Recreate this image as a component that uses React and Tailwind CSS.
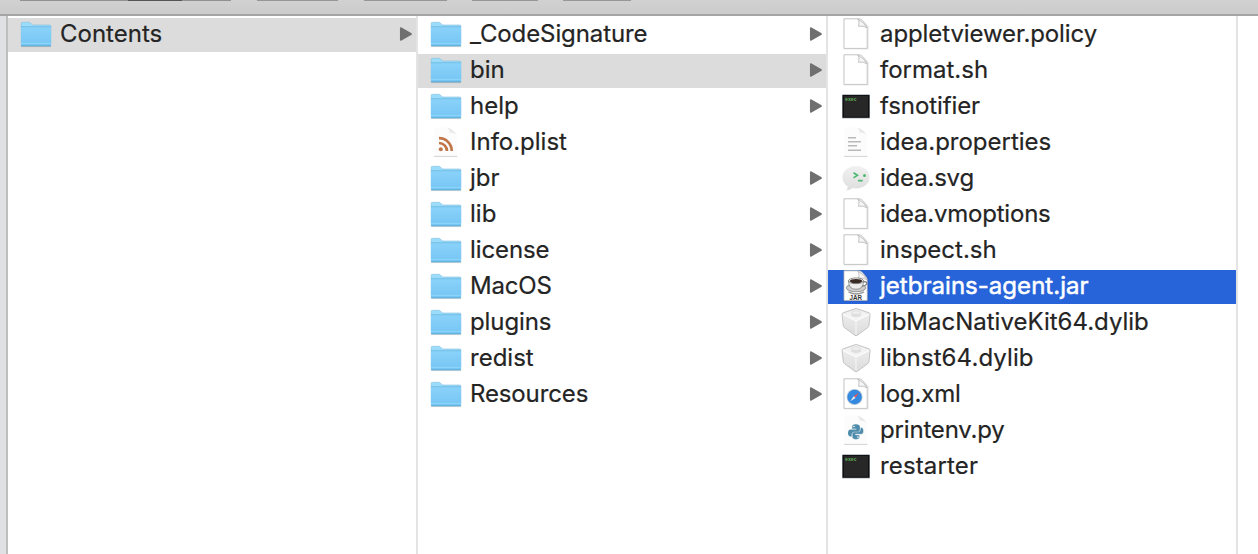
import React from "react";

const Folder = () => (
  <svg width="34" height="34" viewBox="0 0 34 34">
    <defs>
      <linearGradient id="folder" x1="0" y1="0" x2="0" y2="1">
        <stop offset="0" stopColor="#8ad2fa" />
        <stop offset="1" stopColor="#74c5f3" />
      </linearGradient>
    </defs>
    <path d="M2 28.6h30" stroke="#000" strokeOpacity=".16" strokeWidth="1" />
    <path d="M2.2 5.4q0-1.1 1.1-1.1h6.5q1 0 1.7.8l1.1 1.2q.6.7 1.6.7h16.6q1.1 0 1.1 1.1V26H2.200z" fill="#9bdcfb" stroke="#7fbfe0" strokeWidth=".6" />
    <path d="M2 9h30v18q0 1-1 1H3q-1 0-1-1z" fill="url(#folder)" />
    <path d="M2 8.700h30" stroke="#65b1dc" strokeWidth=".7" />
    <path d="M2 25.400h30" stroke="#8ed6fc" strokeWidth="1" />
    <path d="M2 27.300q0 .6 1 .6h28q1 0 1-.6" fill="none" stroke="#5ba6cf" strokeWidth=".9" />
  </svg>
);

const Page = ({ children }) => (
  <svg width="34" height="34" viewBox="-1 0 34 34">
    <path d="M4.500 1.200h16.200L28 8.600V30.800H4.500z" fill="none" stroke="#000" strokeOpacity=".06" strokeWidth="2" />
    <path d="M4 .8h14.600q2.200 0 3.700 1.600l3.700 4.400q1.200 1.400 1.200 3.400V30.400H4z" fill="#fff" stroke="#b9b9b9" strokeWidth=".8" />
    <path d="M17.600 1q2 1.200 1 7.300 4.800-1 8.400 1.500Q24.300 4.200 17.600 1z" fill="#f6f6f6" stroke="#b5b5b5" strokeWidth=".8" />
    {children}
  </svg>
);

const SoftPage = ({ children }) => (
  <svg width="34" height="34" viewBox="-1 0 34 34">
    <defs>
      <linearGradient id="curl" x1="0" y1="1" x2="1" y2="0">
        <stop offset="0" stopColor="#fff" />
        <stop offset="1" stopColor="#d5d5d5" />
      </linearGradient>
    </defs>
    <path d="M4.500 1.500h14q4 1 8.500 8V30H4.500z" fill="#fcfcfc" />
    <path d="M15.500 1.200q4 .4 4 5.800 5.400-.7 7.600 2.400Q23.100 2.600 15.500 1.200z" fill="url(#curl)" />
    <path d="M4 30.400h23.400" stroke="#c8c8c8" strokeWidth=".8" />
    {children}
  </svg>
);

const Feed = () => (
  <SoftPage>
    <g fill="none" stroke="#c07648" strokeWidth="2.700">
      <path d="M9 12.200a12.700 12.700 0 0 1 12.700 12.700" />
      <path d="M9 17a8 8 0 0 1 8 8" />
    </g>
    <circle cx="10.800" cy="23.200" r="2" fill="#c07648" />
  </SoftPage>
);

const Lines = () => (
  <SoftPage>
    <path d="M8 11.800h8M8 15.800h13M8 19.800h9M8 24.300h13" stroke="#b9b9b9" strokeWidth="1.500" />
  </SoftPage>
);

const Python = () => (
  <SoftPage>
    <g fill="#4d8baa">
      <path d="M15.8 10.2c-3 0-3.600 1.100-3.600 2.500v2h4.100v.7h-5.800c-1.600 0-2.500 1.500-2.500 3.700s1 3.500 2.400 3.500h1.300v-2.100c0-1.500 1.200-2.500 2.600-2.500h3.500c1.200 0 2.100-.9 2.100-2.100v-3.200c0-1.600-1.500-2.500-4.100-2.500z" />
      <path d="M15.800 25.400c3 0 3.800-1.100 3.800-2.500v-2h-4.100v-.7h5.800c1.600 0 2.200-1.500 2.200-3.500s-.9-3.300-2.100-3.300h-1v1.900c0 1.500-1.200 2.700-2.600 2.700h-3.500c-1.200 0-2.100.9-2.100 2.100v2.800c0 1.600 1.400 2.500 3.600 2.500z" stroke="#fcfcfc" strokeWidth=".4" />
    </g>
    <circle cx="14" cy="12.500" r=".8" fill="#fff" />
    <circle cx="17.900" cy="23.100" r=".8" fill="#fff" />
  </SoftPage>
);

const Exec = () => (
  <svg width="34" height="34" viewBox="-1 0 34 34">
    <rect x="2" y="4.400" width="28" height="24.200" rx="1" fill="#aab8c2" />
    <rect x="2.500" y="4.900" width="27" height="22.900" fill="#101010" />
    <rect x="4" y="6" width="24" height="20.700" fill="#272727" />
    <text x="5" y="11.200" fontFamily="Liberation Mono, monospace" fontSize="4.800" fontWeight="700" fill="#62b15d">exec</text>
  </svg>
);

const Bubble = () => (
  <svg width="34" height="34" viewBox="-1 0 34 34">
    <defs>
      <linearGradient id="bubble" x1="0" y1="0" x2="0" y2="1">
        <stop offset="0" stopColor="#f1f1f1" />
        <stop offset="1" stopColor="#dedede" />
      </linearGradient>
    </defs>
    <path d="M16 4C8.200 4 2.400 9 2.400 15.200c0 4 2 7.200 5.200 9.200.2 1.700-.5 3-1.600 4.100 2.700-.2 4.800-1 6.500-2.500 1.100.3 2.300.4 3.500.4 7.800 0 13.600-4.900 13.600-11.200S23.800 4 16 4z" fill="url(#bubble)" />
    <path d="M13.500 10.700l4 2.500-4 2.700M18 18.600h4.700" fill="none" stroke="#4cb972" strokeWidth="1.600" />
    <circle cx="24.500" cy="13.500" r="1.500" fill="#4cb972" />
  </svg>
);

const Jar = () => (
  <Page>
    <path d="M8.500 21.800q7.500 4.500 15.500 0" fill="none" stroke="#999" strokeWidth="1.400" />
    <ellipse cx="16" cy="17.800" rx="9.700" ry="4" fill="#cdcdcd" stroke="#777" strokeWidth=".7" />
    <path d="M22.500 12q4.500-1 4.200 1.500-.4 2.300-5 2.600" fill="none" stroke="#858585" strokeWidth="1.400" />
    <path d="M8.500 10.800h15q0 8.500-7.500 8.500t-7.500-8.500z" fill="#ededed" stroke="#777" strokeWidth=".7" />
    <ellipse cx="16" cy="10.800" rx="7.500" ry="2.900" fill="#eee" stroke="#666" strokeWidth=".7" />
    <ellipse cx="16" cy="11.100" rx="6.200" ry="2.200" fill="#392a23" />
    <text x="9.500" y="29.500" textLength="12.500" lengthAdjust="spacingAndGlyphs" fontFamily="Liberation Sans, sans-serif" fontSize="7.500" fontWeight="700" fill="#343434">JAR</text>
  </Page>
);

const Brick = () => (
  <svg width="34" height="34" viewBox="-1 0 34 34">
    <defs>
      <linearGradient id="brick" x1="0" y1="0" x2="0" y2="1">
        <stop offset="0" stopColor="#f0f0f0" />
        <stop offset="1" stopColor="#dcdcdc" />
      </linearGradient>
    </defs>
    <path d="M14.800 2.800q1.300-.5 2.600 0L29 6.800q1.200.5 1.100 1.800l-1.200 11.200q-.1 1-1 1.700L17.300 29.300q-1.200.8-2.400 0L4.300 21.500q-.9-.7-1-1.700L2.100 8.600Q2 7.300 3.200 6.800z" fill="url(#brick)" stroke="#b7b7b7" strokeWidth=".8" />
    <path d="M3 8.500l13 6.500 13.200-6.500L16.200 3.800z" fill="#f3f3f3" />
    <path d="M3 8.500l13 6.500 13.200-6.500" fill="none" stroke="#fff" strokeWidth="1" />
    <path d="M16 15.500v13" stroke="#f8f8f8" strokeWidth="1" />
    <path d="M11.400 6.600v3.100q4.700 2.600 9.500 0V6.600z" fill="#dedede" />
    <ellipse cx="16.100" cy="6.700" rx="4.800" ry="2" fill="#ededed" stroke="#d0d0d0" strokeWidth=".5" />
  </svg>
);

const Safari = () => (
  <Page>
    <circle cx="14.600" cy="19" r="8" fill="#b9c9d9" />
    <circle cx="14.600" cy="19" r="7.200" fill="#3289df" />
    <path d="M18.900 14.700l-3.400 5-1.700-1.700z" fill="#e8555a" />
    <path d="M10.300 23.300l3.400-5 1.800 1.700z" fill="#eee" />
  </Page>
);

const icons = { folder: Folder, page: Page, feed: Feed, lines: Lines, python: Python, exec: Exec, bubble: Bubble, jar: Jar, brick: Brick, safari: Safari };

const columns = [
  [{ name: "Contents", icon: "folder", selected: true }],
  [
    { name: "_CodeSignature", icon: "folder", tracking: "tracking-[-0.1px]" },
    { name: "bin", icon: "folder", selected: true },
    { name: "help", icon: "folder" },
    { name: "Info.plist", icon: "feed" },
    { name: "jbr", icon: "folder" },
    { name: "lib", icon: "folder" },
    { name: "license", icon: "folder", tracking: "tracking-[-0.1px]" },
    { name: "MacOS", icon: "folder", tracking: "tracking-[-0.2px]" },
    { name: "plugins", icon: "folder", tracking: "tracking-[-0.1px]" },
    { name: "redist", icon: "folder" },
    { name: "Resources", icon: "folder", tracking: "tracking-[-0.13px]" },
  ],
  [
    { name: "appletviewer.policy", icon: "page", tracking: "tracking-[-0.1px]" },
    { name: "format.sh", icon: "page" },
    { name: "fsnotifier", icon: "exec", tracking: "tracking-[-0.1px]" },
    { name: "idea.properties", icon: "lines" },
    { name: "idea.svg", icon: "bubble", tracking: "tracking-[-0.2px]" },
    { name: "idea.vmoptions", icon: "page", tracking: "tracking-[-0.22px]" },
    { name: "inspect.sh", icon: "page" },
    { name: "jetbrains-agent.jar", icon: "jar", active: true, tracking: "tracking-[0.03px]" },
    { name: "libMacNativeKit64.dylib", icon: "brick" },
    { name: "libnst64.dylib", icon: "brick", tracking: "tracking-[0.1px]" },
    { name: "log.xml", icon: "safari", tracking: "tracking-[-0.15px]" },
    { name: "printenv.py", icon: "python", tracking: "tracking-[-0.18px]" },
    { name: "restarter", icon: "exec", tracking: "tracking-[0.15px]" },
  ],
];

function Row({ item }) {
  const Icon = icons[item.icon];
  const tone = item.active
    ? "bg-[#2763d9] text-white [-webkit-text-stroke:0.5px_white]"
    : item.selected
      ? "bg-[#dcdcdc] text-[#242424] [-webkit-text-stroke:0.2px_#242424]"
      : "text-[#242424] [-webkit-text-stroke:0.2px_#242424]";
  return (
    <li className={`flex h-[34px] items-center pl-[11px] ${tone}`}>
      <span className="flex w-[41px] shrink-0 [-webkit-text-stroke:0]">
        <Icon />
      </span>
      <span className={`grow pb-[2px] text-[24px] leading-[32px] whitespace-nowrap ${item.tracking || ""}`}>{item.name}</span>
      {item.icon === "folder" && (
        <svg className="mr-[3px] mb-[2px] shrink-0" width="14" height="16" viewBox="0 0 14 16">
          <path d="M1.700 2v12L12.200 8z" fill="#707070" stroke="#707070" strokeWidth="1.500" strokeLinejoin="round" />
        </svg>
      )}
    </li>
  );
}

export default function App() {
  return (
    <div className="flex h-[554px] w-[1258px] flex-col overflow-hidden bg-white font-['Inter',sans-serif]">
      <header className="flex h-4 shrink-0 items-start border-b-2 border-[#a6a5a6] bg-linear-to-b from-[#d1d1d1] to-[#cccccc] pl-[20px]">
        <div className="flex h-px w-[211px] bg-[#919191]">
          <div className="ml-[108px] h-px w-[54px] bg-[#555]" />
        </div>
        <div className="ml-[26px] h-px w-[81px] bg-[#979797]" />
        <div className="ml-[26px] h-px w-[83px] bg-[#979797]" />
        <div className="ml-[25px] h-px w-[66px] bg-[#979797]" />
        <div className="ml-[25px] h-px w-[68px] bg-[#979797]" />
      </header>
      <main className="flex grow">
        <aside className="w-2 shrink-0 border-r-2 border-[#bebebe] bg-[#dfe1e4]" />
        {columns.map((items, i) => (
          <ul key={i} className="flex w-[410px] shrink-0 flex-col gap-[2px] border-r-2 border-[#e4e4e4] pt-[2px]">
            {items.map((item) => (
              <Row key={item.name} item={item} />
            ))}
          </ul>
        ))}
      </main>
    </div>
  );
}
